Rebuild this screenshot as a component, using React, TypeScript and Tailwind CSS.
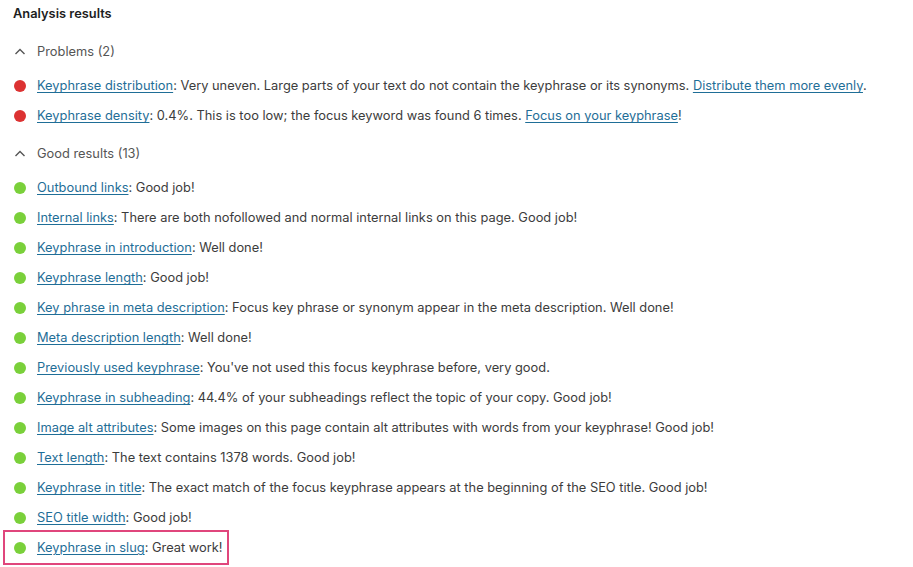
const problems = [
  {
    label: "Keyphrase distribution",
    text: ": Very uneven. Large parts of your text do not contain the keyphrase or its synonyms. ",
    link: "Distribute them more evenly",
    end: ".",
  },
  {
    label: "Keyphrase density",
    text: ": 0.4%. This is too low; the focus keyword was found 6 times. ",
    link: "Focus on your keyphrase",
    end: "!",
  },
];

const good = [
  { label: "Outbound links", text: ": Good job!" },
  { label: "Internal links", text: ": There are both nofollowed and normal internal links on this page. Good job!" },
  { label: "Keyphrase in introduction", text: ": Well done!" },
  { label: "Keyphrase length", text: ": Good job!" },
  { label: "Key phrase in meta description", text: ": Focus key phrase or synonym appear in the meta description. Well done!" },
  { label: "Meta description length", text: ": Well done!" },
  { label: "Previously used keyphrase", text: ": You've not used this focus keyphrase before, very good." },
  { label: "Keyphrase in subheading", text: ": 44.4% of your subheadings reflect the topic of your copy. Good job!" },
  { label: "Image alt attributes", text: ": Some images on this page contain alt attributes with words from your keyphrase! Good job!" },
  { label: "Text length", text: ": The text contains 1378 words. Good job!" },
  { label: "Keyphrase in title", text: ": The exact match of the focus keyphrase appears at the beginning of the SEO title. Good job!" },
  { label: "SEO title width", text: ": Good job!" },
];

const Chevron = () => (
  <svg width="12" height="12" viewBox="0 0 12 12" className="text-[#555]">
    <path d="M1.5 8 L6 3.5 L10.5 8" fill="none" stroke="currentColor" strokeWidth="1.4" />
  </svg>
);

const Link = ({ children }: { children: string }) => (
  <a href="#" className="text-[#1f6e97] underline underline-offset-2 decoration-1">
    {children}
  </a>
);

const Dot = ({ color }: { color: string }) => (
  <span className={`w-[12px] h-[12px] rounded-full shrink-0 ${color}`} />
);

const SectionHeader = ({ title }: { title: string }) => (
  <div className="h-[30px] flex items-center pl-[14px] gap-[11px] text-[#555]">
    <Chevron />
    <span>{title}</span>
  </div>
);

export default function App() {
  return (
    <div
      className="bg-white w-[913px] h-[567px] overflow-hidden text-[12.85px] text-[#3c3c3c]"
      style={{ fontFamily: 'Inter, "Liberation Sans", Arial, sans-serif' }}
    >
      <h2 className="pt-[4px] pl-[13px] h-[25px] leading-5 font-semibold text-[#1e1e1e]">Analysis results</h2>

      <div className="mt-[12px]">
        <SectionHeader title="Problems (2)" />
        <div className="mt-[4px]">
          {problems.map((p) => (
            <div key={p.label} className="h-[30px] flex items-center pl-[14px] gap-[11px]">
              <Dot color="bg-[#dc3232]" />
              <p className="whitespace-nowrap">
                <Link>{p.label}</Link>
                {p.text}
                <Link>{p.link}</Link>
                {p.end}
              </p>
            </div>
          ))}
        </div>
      </div>

      <div className="mt-[8px]">
        <SectionHeader title="Good results (13)" />
        <div className="mt-[4px]">
          {good.map((g) => (
            <div key={g.label} className="h-[30px] flex items-center pl-[14px] gap-[11px]">
              <Dot color="bg-[#7ad03a]" />
              <p className="whitespace-nowrap">
                <Link>{g.label}</Link>
                {g.text}
              </p>
            </div>
          ))}
          <div className="ml-[3px] -mt-[3px] w-[226px] h-[35px] border-2 border-[#e0467c] flex items-center pl-[9px] gap-[11px]">
            <Dot color="bg-[#7ad03a]" />
            <p className="whitespace-nowrap">
              <Link>Keyphrase in slug</Link>: Great work!
            </p>
          </div>
        </div>
      </div>
    </div>
  );
}
